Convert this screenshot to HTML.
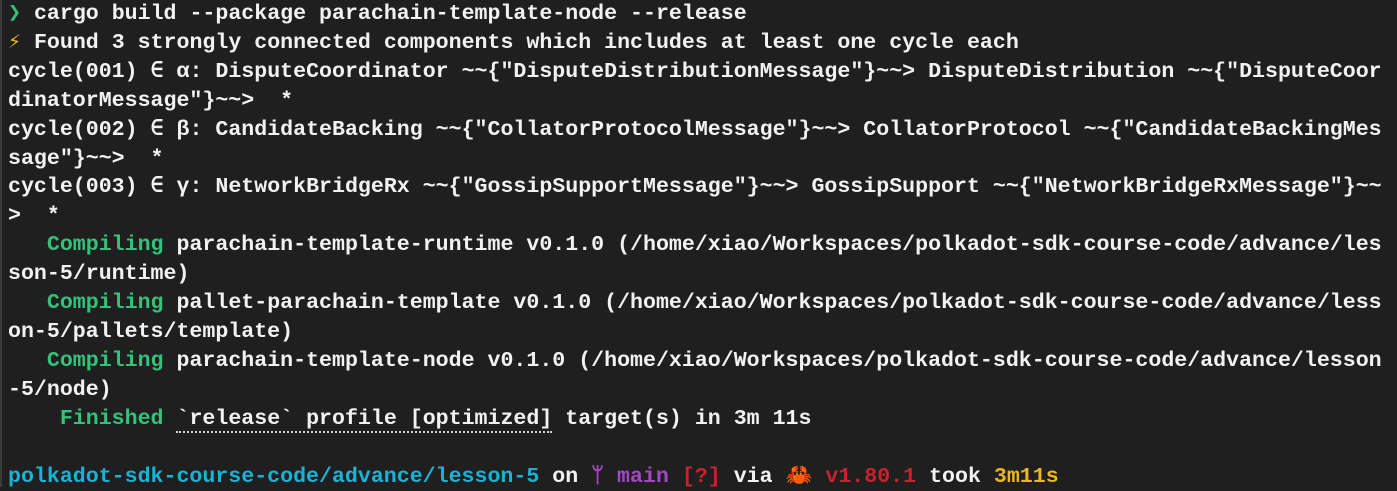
<!DOCTYPE html>
<html><head><meta charset="utf-8"><style>
html,body{margin:0;padding:0;background:#1f1f1f;width:1397px;height:487px;overflow:hidden}
body{border-left:2px solid #3a3a3a;box-sizing:border-box}
pre{margin:0;position:absolute;left:8px;top:0px;font-family:"Liberation Mono","DejaVu Sans Mono",monospace;font-size:21.6px;line-height:28.9px;color:#f2f2f2;font-weight:bold;white-space:pre}
.g{color:#33c27a}.b{color:#1ab2d6}.p{color:#a447c4}.r{color:#c8232c}.y{color:#eab81b}
.u{border-bottom:2px dotted #d0d0d0}
</style></head><body><pre><span class="g">❯</span> cargo build --package parachain-template-node --release
<span class="y">⚡</span> Found 3 strongly connected components which includes at least one cycle each
cycle(001) ∈ α: DisputeCoordinator ~~{"DisputeDistributionMessage"}~~> DisputeDistribution ~~{"DisputeCoor
dinatorMessage"}~~>  *
cycle(002) ∈ β: CandidateBacking ~~{"CollatorProtocolMessage"}~~> CollatorProtocol ~~{"CandidateBackingMes
sage"}~~>  *
cycle(003) ∈ γ: NetworkBridgeRx ~~{"GossipSupportMessage"}~~> GossipSupport ~~{"NetworkBridgeRxMessage"}~~
>  *
   <span class="g">Compiling</span> parachain-template-runtime v0.1.0 (/home/xiao/Workspaces/polkadot-sdk-course-code/advance/les
son-5/runtime)
   <span class="g">Compiling</span> pallet-parachain-template v0.1.0 (/home/xiao/Workspaces/polkadot-sdk-course-code/advance/less
on-5/pallets/template)
   <span class="g">Compiling</span> parachain-template-node v0.1.0 (/home/xiao/Workspaces/polkadot-sdk-course-code/advance/lesson
-5/node)
    <span class="g">Finished</span> <span class="u">`release` profile [optimized]</span> target(s) in 3m 11s

<span class="b">polkadot-sdk-course-code/advance/lesson-5</span> on <span class="p">ᛘ main</span> <span class="r">[?]</span> via <span class="r">🦀 v1.80.1</span> took <span class="y">3m11s</span></pre></body></html>
